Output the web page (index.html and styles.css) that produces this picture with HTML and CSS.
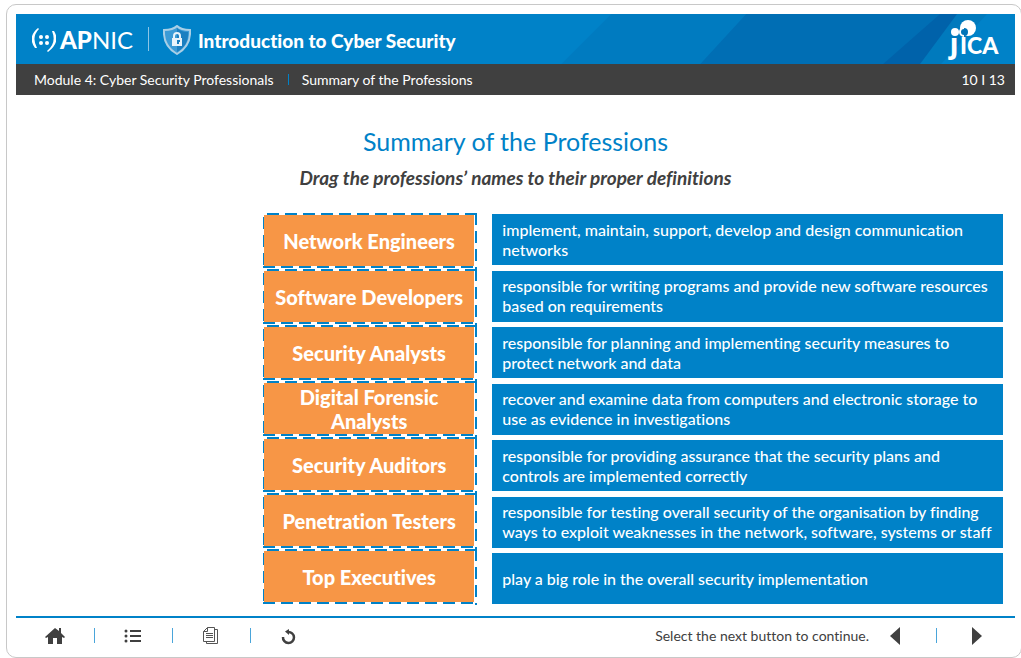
FILE: index.html
```html
<!DOCTYPE html>
<html lang="en">
<head>
<meta charset="utf-8">
<title>Introduction to Cyber Security</title>
<link rel="stylesheet" href="styles.css">
</head>
<body>
<div class="player">
  <header class="banner">
    <svg class="banner-art" viewBox="0 0 1000 50" preserveAspectRatio="none" aria-hidden="true">
      <path fill="#007bc0" d="M596 0H1000V50H546z"/>
      <path fill="#006eb4" d="M731 0H1000V50H685z"/>
      <path fill="#0062aa" d="M925 0H1000V50H868z"/>
      <path fill="#007abd" d="M942 0H1000V50H905z"/>
      <path fill="#0082c8" d="M972 0H1000V50H926z"/>
    </svg>
    <div class="apnic">
      <svg width="24" height="24" viewBox="0 0 24 24" fill="#fff" aria-hidden="true">
        <path d="M6 0Q-5 9 3 20L5 20Q-1 9 7 1z"/>
        <path d="M20 3L22 3Q29 14 16 24L15 23Q25 15 20 3z"/>
        <circle cx="9" cy="9" r="2"/><circle cx="15" cy="9" r="2"/><circle cx="9" cy="15" r="2"/><circle cx="15" cy="15" r="2"/>
      </svg>
      <span class="apnic-name"><b>AP</b>NIC</span>
    </div>
    <span class="banner-rule"></span>
    <svg class="shield" width="28" height="30" viewBox="0 0 28 30" aria-hidden="true">
      <path fill="#3b9bd6" stroke="#a9cfe6" stroke-width="2" d="M14 1Q18 5 27 5Q28 21 14 29Q0 21 1 5Q10 5 14 1z"/>
      <path fill="#1b7fc0" d="M14 3Q18 7 25 7Q26 20 14 27z"/>
      <path fill="none" stroke="#e8f3fa" stroke-width="2" d="M11 14V11a3 3 0 0 1 6 0V14"/>
      <rect x="9" y="13" width="10" height="8" fill="#e8f3fa"/>
      <path fill="#1b7fc0" d="M14 15h3v2h-1v2h-2z"/>
    </svg>
    <h1 class="course">Introduction to Cyber Security</h1>
    <svg class="jica" width="56" height="42" viewBox="0 0 56 42" role="img" aria-label="JICA">
      <circle cx="22" cy="10" r="8" fill="#fff"/>
      <circle cx="9" cy="14" r="4" fill="#fff"/>
      <circle cx="18" cy="14" r="4" fill="#0074b8"/>
      <path fill="none" stroke="#fff" stroke-width="2" d="M18 10a4 4 0 0 0 0 8"/>
      <text class="jica-text" y="36"><tspan class="jica-j" x="4">J</tspan><tspan x="14">I</tspan><tspan x="21">CA</tspan></text>
    </svg>
  </header>
  <nav class="crumbs" aria-label="Position">
    <span>Module 4: Cyber Security Professionals</span>
    <span class="crumb-rule"></span>
    <span>Summary of the Professions</span>
    <span class="page">10 I 13</span>
  </nav>
  <main class="slide">
    <h2 class="title">Summary of the Professions</h2>
    <p class="hint">Drag the professions’ names to their proper definitions</p>
    <div class="match">
      <div class="names">
        <div class="slot"><button class="name">Network Engineers</button></div>
        <div class="slot"><button class="name">Software Developers</button></div>
        <div class="slot"><button class="name">Security Analysts</button></div>
        <div class="slot"><button class="name">Digital Forensic<br>Analysts</button></div>
        <div class="slot"><button class="name">Security Auditors</button></div>
        <div class="slot"><button class="name">Penetration Testers</button></div>
        <div class="slot"><button class="name">Top Executives</button></div>
      </div>
      <div class="defs">
        <p class="def">implement, maintain, support, develop and design communication<br>networks</p>
        <p class="def">responsible for writing programs and provide new software resources<br>based on requirements</p>
        <p class="def">responsible for planning and implementing security measures to<br>protect network and data</p>
        <p class="def">recover and examine data from computers and electronic storage to<br>use as evidence in investigations</p>
        <p class="def">responsible for providing assurance that the security plans and<br>controls are implemented correctly</p>
        <p class="def">responsible for testing overall security of the organisation by finding<br>ways to exploit weaknesses in the network, software, systems or staff</p>
        <p class="def">play a big role in the overall security implementation</p>
      </div>
    </div>
  </main>
  <footer class="controls">
    <button class="tool" aria-label="Home"><svg width="20" height="18" viewBox="0 0 20 18" fill="#404040"><path d="M10 1L0 10L1 11L3 10V17H8V11H12V17H17V10L19 11L20 10L16 6V1H14V4z"/></svg></button>
    <span class="rule"></span>
    <button class="tool" aria-label="Contents"><svg width="18" height="16" viewBox="0 0 18 16" fill="#404040"><circle cx="2" cy="3" r="1.5"/><circle cx="2" cy="8" r="1.5"/><circle cx="2" cy="13" r="1.5"/><path d="M6 2h11v2H6zM6 7h11v2H6zM6 12h11v2H6z"/></svg></button>
    <span class="rule"></span>
    <button class="tool" aria-label="Notes"><svg width="16" height="18" viewBox="0 0 16 18" fill="none" stroke="#555"><path d="M4.500 .5h7v14h-11v-10zM4.500 .5v4h-4M12 2.500h2.500v14h-11V15M3 6.500h7M3 8.500h7M3 10.500h7"/></svg></button>
    <span class="rule"></span>
    <button class="tool" aria-label="Restart"><svg width="16" height="18" viewBox="0 0 16 18"><path fill="none" stroke="#404040" stroke-width="2.500" d="M7 5A5.500 5.500 0 1 1 2 10"/><path fill="#404040" d="M4 4.500L8 2V8z"/></svg></button>
    <span class="prompt">Select the next button to continue.</span>
    <button class="step" aria-label="Previous"><svg width="10" height="18" viewBox="0 0 10 18" fill="#404040"><path d="M10 0V18L0 9z"/></svg></button>
    <span class="rule step-rule"></span>
    <button class="step" aria-label="Next"><svg width="10" height="18" viewBox="0 0 10 18" fill="#404040"><path d="M0 0V18L10 9z"/></svg></button>
  </footer>
</div>
</body>
</html>
```
FILE: styles.css
```css
* { box-sizing: border-box; }
body {
  margin: 0;
  padding: 4px 0 0 6px;
  overflow: hidden;
  background: #fff;
  color: #404040;
  font-family: Lato, "Noto Sans", sans-serif;
  font-variant-ligatures: none;
}
h1, h2, p { margin: 0; }
button {
  padding: 0;
  border: 0;
  background: none;
  color: inherit;
  font: inherit;
  cursor: pointer;
}
svg { display: block; }
.player {
  margin-right: -1px;
  padding: 9px 6px 0 9px;
  border: 1px solid #c8c8c8;
  border-radius: 10px;
}
.banner {
  position: relative;
  display: flex;
  align-items: center;
  height: 50px;
  padding: 0 13px 0 16px;
  background: #0082c8;
  color: #fff;
}
.banner-art { position: absolute; inset: 0; width: 100%; height: 100%; }
.apnic, .banner-rule, .shield, .course, .jica { position: relative; }
.apnic { display: flex; align-items: center; gap: 4px; padding-top: 1px; }
.apnic-name { font: 400 24px/28px Lato, sans-serif; }
.apnic-name b { font-weight: 900; }
.banner-rule { width: 1px; height: 24px; margin: 0 14px 0 15px; background: #8cc5e6; }
.shield { margin-top: 2px; }
.course { margin: 4px 0 0 7px; font-size: 19px; line-height: 26px; font-weight: 900; }
.jica { margin-left: auto; }
.jica-text { fill: #fff; font: 900 23px Lato, sans-serif; }
.jica-j { font-family: "Noto Sans", sans-serif; }
.crumbs {
  display: flex;
  align-items: center;
  height: 31px;
  padding: 0 10px 0 18px;
  background: #404040;
  color: #fff;
  font-size: 14px;
  line-height: 20px;
}
.crumb-rule { width: 1px; height: 11px; margin: 0 13px 0 14px; background: #0082c8; }
.page { margin-left: auto; }
.slide { padding: 29px 12px 11px; }
.title { color: #0082c8; font-size: 25px; line-height: 34px; font-weight: 400; text-align: center; }
.hint { margin-top: 8px; font-size: 19px; line-height: 24px; font-weight: 700; font-style: italic; text-align: center; }
.match { display: grid; grid-template-columns: 214fr 510fr; column-gap: 15px; margin: 23px 0 0 235px; }
.names, .defs { display: flex; flex-direction: column; }
.slot {
  height: 56px;
  padding: 2px 3px 3px 1px;
  background:
    repeating-linear-gradient(90deg, #0082c8 0 12px, transparent 12px 18px) 4px 0 / 100% 2px no-repeat,
    repeating-linear-gradient(90deg, #0082c8 0 12px, transparent 12px 18px) 0 53px / 100% 2px no-repeat,
    repeating-linear-gradient(180deg, #0082c8 0 12px, transparent 12px 18px) 0 4px / 2px 100% no-repeat,
    repeating-linear-gradient(180deg, #0082c8 0 12px, transparent 12px 18px) 100% 0 / 2px 100% no-repeat;
}
.name {
  width: 100%;
  height: 100%;
  background: #f79646;
  color: #fff;
  font-size: 20px;
  line-height: 24px;
  font-weight: 900;
}
.defs { justify-content: space-between; padding: 1px 0; }
.def {
  display: flex;
  align-items: center;
  height: 51px;
  padding: 0 10px;
  background: #0082c8;
  color: #fff;
  font-size: 16px;
  line-height: 20px;
  font-weight: 500;
}
.controls {
  display: flex;
  align-items: center;
  height: 41px;
  padding: 0 33px 4px 28px;
  border-top: 2px solid #0082c8;
}
.rule { width: 1px; height: 15px; margin: 0 27px 0 28px; background: #4aa5da; }
.tool { display: grid; place-items: center; width: 22px; }
.prompt { margin-left: auto; font-size: 14px; line-height: 20px; }
.step { margin-left: 21px; }
.step-rule { margin: 0 14px 0 36px; }
```
